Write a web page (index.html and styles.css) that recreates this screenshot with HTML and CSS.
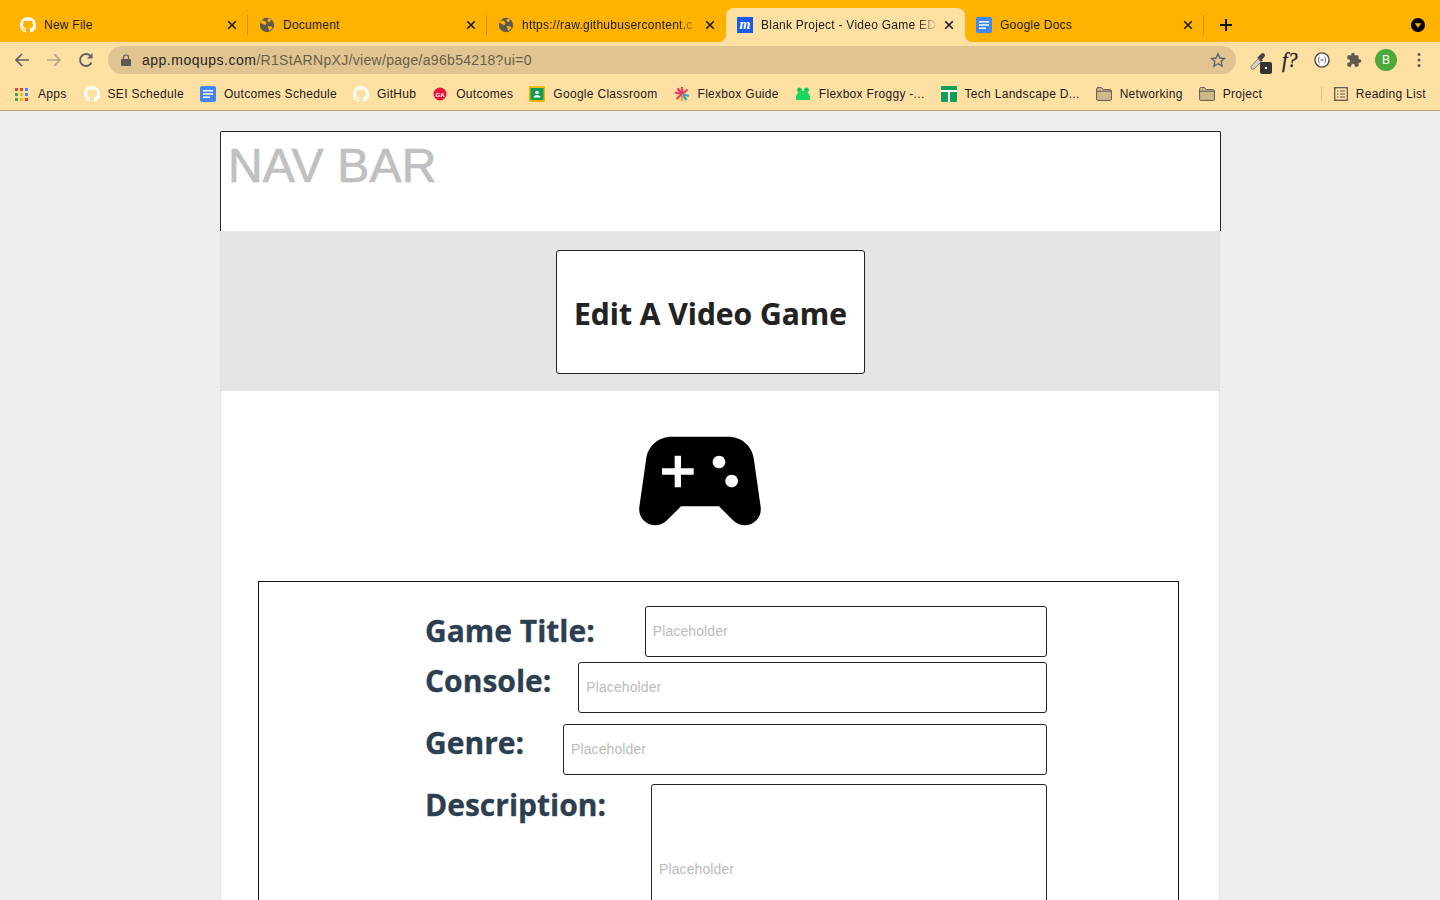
FILE: index.html
```html
<!DOCTYPE html>
<html lang="en">
<head>
    <meta charset="utf-8">
    <title>Blank Project - Video Game EDIT</title>
    <link rel="stylesheet" href="styles.css">
</head>
<body>

<svg class="defs" width="0" height="0">
    <symbol id="gh" viewBox="0 0 16 16"><path d="M8 0C3.58 0 0 3.58 0 8c0 3.54 2.29 6.53 5.47 7.59.4.07.55-.17.55-.38 0-.19-.01-.82-.01-1.49-2.01.37-2.53-.49-2.69-.94-.09-.23-.48-.94-.82-1.13-.28-.15-.68-.52-.01-.53.63-.01 1.08.58 1.23.82.72 1.21 1.87.87 2.33.66.07-.52.28-.87.51-1.07-1.78-.2-3.64-.89-3.64-3.95 0-.87.31-1.59.82-2.15-.08-.2-.36-1.02.08-2.12 0 0 .67-.21 2.2.82.64-.18 1.32-.27 2-.27.68 0 1.36.09 2 .27 1.53-1.04 2.2-.82 2.2-.82.44 1.1.16 1.92.08 2.12.51.56.82 1.27.82 2.15 0 3.07-1.87 3.75-3.65 3.95.29.25.54.73.54 1.48 0 1.07-.01 1.93-.01 2.2 0 .21.15.46.55.38A8.013 8.013 0 0016 8c0-4.42-3.58-8-8-8z" fill="#fff"/></symbol>
    <symbol id="globe" viewBox="0 0 16 16"><circle cx="8" cy="8" r="7.2" fill="#5f5a50"/><path d="M3 3.500l3 .5 1.500 2-1 2-2-.5-3-2zM9 1.500l3 1-1 2.500-2.500-.5zM9 9l3.500.5 1 1.500-3 3-1-2z" fill="#ffb300"/></symbol>
    <symbol id="docs" viewBox="0 0 16 16"><rect width="16" height="16" rx="2" fill="#4285f4"/><path d="M3 4h10v1.600H3zM3 7.200h10v1.600H3zM3 10.400h7V12H3z" fill="#fff"/></symbol>
    <symbol id="folder" viewBox="0 0 16 14"><path d="M.6 12.400V1.600c0-.5.4-1 1-1h4l1.800 2h7c.5 0 1 .4 1 1v8.800c0 .5-.5 1-1 1h-13c-.5 0-.8-.5-.8-1z" fill="#cfb88a" stroke="#5f5a50" stroke-width="1"/><path d="M.6 4.200h14.800" stroke="#5f5a50"/></symbol>
    <symbol id="close" viewBox="0 0 10 10"><path d="M1.200 1.200l7.600 7.600M8.800 1.200L1.200 8.800" stroke="#1c1c1c" stroke-width="1.600"/></symbol>
</svg>

<!-- browser window top -->
<div class="tabstrip">
    <div class="tab sep">
        <svg class="fav"><use href="#gh"/></svg>
        <span class="tab-name">New File</span>
        <svg class="tab-x"><use href="#close"/></svg>
    </div>
    <div class="tab sep">
        <svg class="fav"><use href="#globe"/></svg>
        <span class="tab-name">Document</span>
        <svg class="tab-x"><use href="#close"/></svg>
    </div>
    <div class="tab">
        <svg class="fav"><use href="#globe"/></svg>
        <span class="tab-name fade">https://raw.githubusercontent.c</span>
        <svg class="tab-x"><use href="#close"/></svg>
    </div>
    <div class="tab active">
        <svg class="fav" viewBox="0 0 16 16"><rect width="16" height="16" fill="#1b5ce6"/><text x="8" y="11.500" class="moq">m</text></svg>
        <span class="tab-name fade">Blank Project - Video Game ED</span>
        <svg class="tab-x"><use href="#close"/></svg>
    </div>
    <div class="tab sep">
        <svg class="fav"><use href="#docs"/></svg>
        <span class="tab-name">Google Docs</span>
        <svg class="tab-x"><use href="#close"/></svg>
    </div>
    <svg class="new-tab" viewBox="0 0 12 12"><path d="M6 0v12M0 6h12" stroke="#111" stroke-width="2"/></svg>
    <svg class="profile-dot" viewBox="0 0 14 14"><circle cx="7" cy="7" r="7" fill="#000"/><path d="M3.600 5.200h6.800L7 9.800z" fill="#ffb300"/></svg>
</div>

<div class="toolbar">
    <svg class="nav-ico" viewBox="0 0 16 16"><path d="M15 8H2M8 2L2 8l6 6" fill="none" stroke="#5f6368" stroke-width="1.700"/></svg>
    <svg class="nav-ico" viewBox="0 0 16 16"><path d="M1 8h13M8 2l6 6-6 6" fill="none" stroke="#b0a58c" stroke-width="1.700"/></svg>
    <svg class="nav-ico" viewBox="0 0 16 16"><path d="M13.500 10.500A6 6 0 1 1 12.300 3.800" fill="none" stroke="#5f6368" stroke-width="1.900"/><path d="M14.500 1v5.500H9z" fill="#5f6368"/></svg>
    <div class="omnibox">
        <svg class="lock" viewBox="0 0 10 12"><path d="M2.500 5V3.500a2.500 2.500 0 0 1 5 0V5" fill="none" stroke="#5f5a50" stroke-width="1.200"/><rect y="5" width="10" height="7" rx="1" fill="#5f5a50"/></svg>
        <span class="url"><b>app.moqups.com</b>/R1StARNpXJ/view/page/a96b54218?ui=0</span>
        <svg class="star" viewBox="0 0 16 16"><path d="M8 1.800l1.900 4.200 4.600.5-3.400 3 1 4.500L8 11.700 3.900 14l1-4.500-3.400-3 4.600-.5z" fill="none" stroke="#5f6368" stroke-width="1.400"/></svg>
    </div>
    <div class="ext-icons">
        <div class="ext dropper">
            <svg viewBox="0 0 18 18"><path d="M1.500 17L1 14.500 8 7l3 3-7 7z" fill="#d9d4c8" stroke="#7d7d7d"/><path d="M8.500 4.500l2-2.200c1-1 2.800-1.600 3.900-.6s.5 2.800-.5 3.800l-2 2 1 1-1.300 1.300-4.400-4.300 1.300-1z" fill="#444"/></svg>
            <span class="ext-badge"></span>
        </div>
        <span class="ext fq">f?</span>
        <svg class="ext" viewBox="0 0 16 16"><circle cx="8" cy="8" r="7.100" fill="#fff" stroke="#4a4a4a" stroke-width="1.400"/><path d="M5.500 5C4.500 5 5 7.500 4 8c1 .5.500 3 1.500 3M10.500 5c1 0 .5 2.500 1.500 3-1 .5-.5 3-1.500 3" fill="none" stroke="#4a4a4a"/><path d="M6.500 8h3" stroke="#4a4a4a"/></svg>
        <svg class="ext" viewBox="0 0 24 24"><path d="M20.500 11H19V7a2 2 0 0 0-2-2h-4V3.500a2.500 2.500 0 0 0-5 0V5H4a2 2 0 0 0-2 2v3.800h1.500a2.700 2.700 0 0 1 0 5.400H2V20a2 2 0 0 0 2 2h3.800v-1.500a2.700 2.700 0 0 1 5.400 0V22H17a2 2 0 0 0 2-2v-4h1.500a2.500 2.500 0 0 0 0-5z" fill="#5f5a50"/></svg>
        <span class="avatar">B</span>
        <svg class="dots" viewBox="0 0 4 16"><circle cx="2" cy="2.500" r="1.500"/><circle cx="2" cy="8" r="1.500"/><circle cx="2" cy="13.500" r="1.500"/></svg>
    </div>
</div>

<div class="bookmarks">
    <span class="bm apps">
        <svg class="apps-ico" viewBox="0 0 13 13">
            <path d="M0 0h3v3H0z" fill="#ea4335"/><path d="M5 0h3v3H5z" fill="#ea4335"/><path d="M10 0h3v3h-3z" fill="#4285f4"/>
            <path d="M0 5h3v3H0z" fill="#34a853"/><path d="M5 5h3v3H5z" fill="#fbbc05"/><path d="M10 5h3v3h-3z" fill="#4285f4"/>
            <path d="M0 10h3v3H0z" fill="#34a853"/><path d="M5 10h3v3H5z" fill="#fbbc05"/><path d="M10 10h3v3h-3z" fill="#ea4335"/>
        </svg>Apps</span>
    <span class="bm"><svg class="bm-ico"><use href="#gh"/></svg>SEI Schedule</span>
    <span class="bm"><svg class="bm-ico"><use href="#docs"/></svg>Outcomes Schedule</span>
    <span class="bm"><svg class="bm-ico"><use href="#gh"/></svg>GitHub</span>
    <span class="bm"><svg class="bm-ico" viewBox="0 0 16 16"><circle cx="8" cy="8" r="6.500" fill="#f0123c"/><text x="8" y="10.500" class="ga">GA</text></svg>Outcomes</span>
    <span class="bm"><svg class="bm-ico" viewBox="0 0 16 16"><rect width="16" height="16" rx="1" fill="#f4b400"/><rect x="1.500" y="2" width="13" height="12" fill="#0f9d58"/><circle cx="8" cy="6.500" r="1.800" fill="#fff"/><path d="M4.500 11.500c0-3.500 7-3.500 7 0z" fill="#fff"/></svg>Google Classroom</span>
    <span class="bm"><svg class="bm-ico" viewBox="0 0 16 16" stroke-width="2.200"><path d="M8 8V1" stroke="#f5365c"/><path d="M8 8l5.500-4.500" stroke="#f5365c"/><path d="M8 8l6.800 2" stroke="#2aa4c9"/><path d="M8 8l4.500 6" stroke="#2aa4c9"/><path d="M8 8v7" stroke="#f5a623"/><path d="M8 8l-5.500 5" stroke="#f5365c"/><path d="M8 8L1 6.500" stroke="#f5365c"/><path d="M8 8L3.500 2.500" stroke="#f5365c"/></svg>Flexbox Guide</span>
    <span class="bm"><svg class="bm-ico" viewBox="0 0 16 16"><circle cx="4.500" cy="4" r="2.500" fill="#17d65c"/><circle cx="11.500" cy="4" r="2.500" fill="#17d65c"/><path d="M1 14c-1-3 1-9 7-9s8 6 7 9z" fill="#17d65c"/><circle cx="4.500" cy="3.600" r="1" fill="#0a5"/><circle cx="11.500" cy="3.600" r="1" fill="#0a5"/></svg>Flexbox Froggy -...</span>
    <span class="bm"><svg class="bm-ico" viewBox="0 0 16 16"><rect width="16" height="16" rx="1" fill="#0f9d58"/><path d="M0 4h16v2H0zM7 4h2v12H7z" fill="#fff"/></svg>Tech Landscape D...</span>
    <span class="bm"><svg class="bm-ico"><use href="#folder"/></svg>Networking</span>
    <span class="bm"><svg class="bm-ico"><use href="#folder"/></svg>Project</span>
    <span class="reading">
        <svg class="read-ico" viewBox="0 0 14 14"><rect x=".7" y=".7" width="12.600" height="12.600" fill="none" stroke="#5f5a50" stroke-width="1.300"/><path d="M3 4h1.500M6 4h5M3 7h1.500M6 7h5M3 10h1.500M6 10h5" stroke="#5f5a50" stroke-width="1.200"/></svg>Reading List</span>
</div>

<!-- the mockup page -->
<div class="viewport">
    <div class="frame">
        <div class="navbar">NAV BAR</div>

        <div class="title-band">
            <div class="title-box"><h1>Edit A Video Game</h1></div>
        </div>

        <div class="icon-row">
            <svg class="pad" viewBox="0 0 24 24"><path d="M21.580 16.090l-1.090-7.660C20.210 6.460 18.520 5 16.530 5H7.470C5.480 5 3.790 6.460 3.510 8.430l-1.090 7.660C2.200 17.630 3.390 19 4.940 19c.68 0 1.320-.27 1.800-.75L9 16h6l2.250 2.250c.48.48 1.130.75 1.800.75 1.560 0 2.750-1.370 2.530-2.910zM11 11H9v2H8v-2H6v-1h2V8h1v2h2v1zm4-1c-.55 0-1-.45-1-1s.45-1 1-1 1 .45 1 1-.45 1-1 1zm2 3c-.55 0-1-.45-1-1s.45-1 1-1 1 .45 1 1-.45 1-1 1z"/></svg>
        </div>

        <form class="game-form">
            <div class="row row-title">
                <label>Game Title:</label>
                <input type="text" placeholder="Placeholder">
            </div>
            <div class="row row-console">
                <label>Console:</label>
                <input type="text" placeholder="Placeholder">
            </div>
            <div class="row row-genre">
                <label>Genre:</label>
                <input type="text" placeholder="Placeholder">
            </div>
            <div class="row row-desc">
                <label>Description:</label>
                <input type="text" class="tall" placeholder="Placeholder">
            </div>
        </form>
    </div>
</div>

</body>
</html>
```

FILE: styles.css
```css
* {
    box-sizing: border-box;
}

html, body {
    height: 100%;
}

body {
    margin: 0;
    overflow: hidden;
    font-family: "Liberation Sans", Arial, sans-serif;
    background-color: #eeeeee;
}

.defs {
    display: block;
    height: 0;
}

/* tabs */
.tabstrip {
    display: flex;
    align-items: flex-end;
    height: 42px;
    padding-left: 9px;
    background-color: #ffb300;
}

.tab {
    position: relative;
    display: flex;
    align-items: center;
    flex: 0 0 239px;
    min-width: 0;
    height: 34px;
    padding: 0 11px;
    font-size: 12px;
    letter-spacing: 0.25px;
    color: #1c1c1c;
}

.tab.sep::after {
    content: "";
    position: absolute;
    right: 0;
    top: 7px;
    height: 20px;
    width: 1px;
    background-color: #c98f10;
}

.tab.active {
    border-radius: 8px 8px 0 0;
    background-color: #ffe0a3;
}

.tab.active::before,
.tab.active::after {
    content: "";
    position: absolute;
    bottom: 0;
    width: 8px;
    height: 8px;
}

.tab.active::before {
    left: -8px;
    background: radial-gradient(circle at 0 0, transparent 8px, #ffe0a3 8.5px);
}

.tab.active::after {
    right: -8px;
    background: radial-gradient(circle at 100% 0, transparent 8px, #ffe0a3 8.5px);
}

.fav {
    flex: none;
    width: 16px;
    height: 16px;
}

.moq {
    font-family: "Liberation Serif", serif;
    font-size: 14px;
    font-weight: 700;
    font-style: italic;
    fill: #fff;
    text-anchor: middle;
}

.tab-name {
    flex: 1;
    margin-left: 8px;
    white-space: nowrap;
}

.tab-name.fade {
    -webkit-mask-image: linear-gradient(to right, #000 88%, transparent 100%);
    mask-image: linear-gradient(to right, #000 88%, transparent 100%);
}

.tab-x {
    flex: none;
    width: 10px;
    height: 10px;
    margin-left: 6px;
}

.new-tab {
    flex: none;
    width: 12px;
    height: 12px;
    margin: 0 0 11px 16px;
}

.profile-dot {
    flex: none;
    width: 14px;
    height: 14px;
    margin: 0 15px 10px auto;
}

/* address bar */
.toolbar {
    display: flex;
    align-items: center;
    height: 36px;
    padding-left: 14px;
    background-color: #ffe0a3;
}

.nav-ico {
    flex: none;
    width: 16px;
    height: 16px;
    margin-right: 16px;
}

.omnibox {
    display: flex;
    align-items: center;
    flex: 0 0 1128px;
    height: 28px;
    margin-left: -2px;
    padding: 0 10px 0 13px;
    border-radius: 14px;
    background-color: #e0c491;
}

.lock {
    flex: none;
    width: 10px;
    height: 12px;
}

.url {
    flex: 1;
    margin-left: 11px;
    font-size: 14px;
    letter-spacing: 0.31px;
    color: #6b5f47;
    white-space: nowrap;
}

.url b {
    font-weight: 400;
    letter-spacing: 0.5px;
    color: #2b2720;
}

.star {
    flex: none;
    width: 16px;
    height: 16px;
}

.ext-icons {
    display: flex;
    align-items: center;
    flex: 1;
    gap: 16px;
    padding-left: 14px;
}

.ext {
    flex: none;
    width: 16px;
    height: 16px;
}

.dropper {
    position: relative;
}

.dropper svg {
    display: block;
    width: 18px;
    height: 18px;
}

.ext-badge {
    position: absolute;
    left: 10px;
    top: 10px;
    width: 12px;
    height: 12px;
    border-radius: 2px;
    background: radial-gradient(circle, #fff 0.8px, #333 1.2px);
}

.fq {
    font-family: "Liberation Serif", serif;
    font-style: italic;
    font-size: 20px;
    line-height: 16px;
    color: #222;
    -webkit-text-stroke: 0.3px #222;
    white-space: nowrap;
}

.avatar {
    flex: none;
    width: 22px;
    height: 22px;
    margin-left: -3px;
    border-radius: 50%;
    background-color: #4caa3a;
    color: #fff;
    font-size: 12px;
    line-height: 22px;
    text-align: center;
}

.dots {
    flex: none;
    width: 4px;
    height: 16px;
    margin-left: 4px;
    fill: #5f5a50;
}

/* bookmarks */
.bookmarks {
    display: flex;
    align-items: center;
    gap: 16px;
    height: 33px;
    padding: 0 14px 0 15px;
    border-bottom: 1px solid #b8a683;
    background-color: #ffe0a3;
    font-size: 12px;
    letter-spacing: 0.3px;
    color: #1c1c1c;
    white-space: nowrap;
}

.bm {
    display: flex;
    align-items: center;
}

.bm.apps {
    margin-right: 1px;
}

.bm-ico {
    flex: none;
    width: 16px;
    height: 16px;
    margin-right: 8px;
}

.ga {
    font-size: 6px;
    font-weight: 700;
    letter-spacing: 0;
    fill: #fff;
    text-anchor: middle;
}

.apps-ico {
    flex: none;
    width: 13px;
    height: 13px;
    margin-right: 10px;
}

.reading {
    display: flex;
    align-items: center;
    margin-left: auto;
    padding-left: 12px;
    border-left: 1px solid #d9c595;
}

.read-ico {
    flex: none;
    width: 14px;
    height: 14px;
    margin-right: 8px;
}

/* mockup */
.viewport {
    height: 789px;
    overflow: hidden;
    padding-top: 20px;
}

.frame {
    width: 1000px;
    height: 900px;
    margin-left: 220px;
    border-left: 1px solid #e2e2e2;
    border-right: 1px solid #e2e2e2;
    background-color: #fff;
}

.navbar {
    width: 1001px;
    height: 100px;
    margin-left: -1px;
    padding: 5px 7px;
    border: 1px solid #222;
    border-bottom: 0;
    border-radius: 2px 2px 0 0;
    background-color: #fff;
    font-size: 48px;
    line-height: 57px;
    letter-spacing: 0.2px;
    color: #c0c0c0;
    -webkit-text-stroke: 0.7px #c0c0c0;
}

.title-band {
    height: 160px;
    padding: 19px 0 0 335px;
    background-color: #e5e5e5;
}

.title-box {
    display: flex;
    align-items: center;
    justify-content: center;
    width: 309px;
    height: 124px;
    border: 1px solid #222;
    border-radius: 3px;
    background-color: #fff;
}

.title-box h1 {
    margin: 2px 0 0;
    font-family: "Open Sans", sans-serif;
    font-size: 30px;
    font-weight: 700;
    color: #222;
    -webkit-text-stroke: 0.2px #222;
}

.icon-row {
    height: 190px;
    padding: 14px 0 0 403px;
}

.pad {
    display: block;
    width: 152px;
    height: 152px;
}

.game-form {
    width: 921px;
    height: 500px;
    margin-left: 37px;
    padding: 24px 131px 0 166px;
    border: 1px solid #111;
}

.row {
    display: flex;
    align-items: flex-start;
}

.row label {
    font-family: "Open Sans", sans-serif;
    font-size: 30px;
    font-weight: 700;
    line-height: 44px;
    color: #2c3e50;
    -webkit-text-stroke: 0.3px #2c3e50;
    white-space: nowrap;
}

.row input {
    flex: 1;
    min-width: 0;
    height: 51px;
    padding: 0 7px 1px;
    border: 1px solid #222;
    border-radius: 3px;
    background-color: #fff;
    font-family: "Liberation Sans", Arial, sans-serif;
    font-size: 14px;
    letter-spacing: 0.1px;
}

.row input::placeholder {
    color: #bbbbbb;
    opacity: 1;
}

.row input.tall {
    height: 170px;
    padding-bottom: 0;
}

.row-title label {
    margin: 3px 50px 0 0;
}

.row-console {
    margin-top: 5px;
}

.row-console label {
    margin: -3px 27px 0 0;
}

.row-genre {
    margin-top: 11px;
}

.row-genre label {
    margin: -3px 39px 0 0;
}

.row-desc {
    margin-top: 9px;
}

.row-desc label {
    margin: -1px 45px 0 0;
}
```
